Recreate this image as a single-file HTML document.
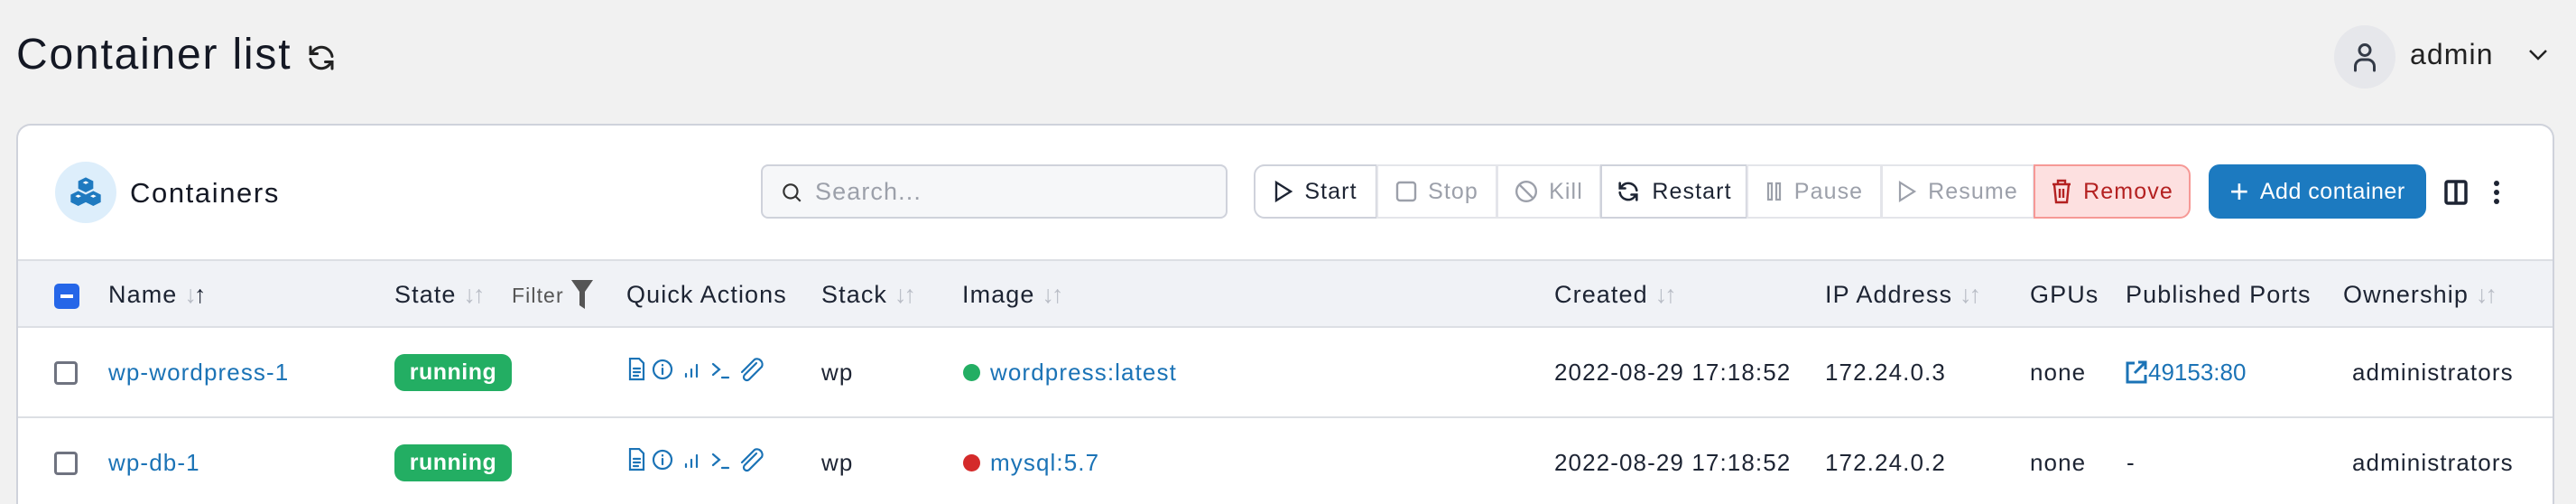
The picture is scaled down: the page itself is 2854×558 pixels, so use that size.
<!DOCTYPE html>
<html><head><meta charset="utf-8"><style>
*{box-sizing:border-box;margin:0;padding:0}
html{width:2854px;height:558px;overflow:hidden}
body{width:2854px;height:558px;overflow:hidden;background:#f1f1f1;font-family:"Liberation Sans",sans-serif;color:#1d2433;position:relative;letter-spacing:1.1px}
.a{position:absolute;white-space:nowrap}
.card{position:absolute;left:18px;top:137px;width:2812px;height:421px;background:#fff;border:2px solid #cfd2db;border-bottom:none;border-radius:16px 16px 0 0;overflow:hidden}
.btn{position:absolute;top:182px;height:60px;border:2px solid #e4e5ea;background:#fff;font-size:25px;display:flex;align-items:center;justify-content:center;gap:12px;color:#9ca0aa}
.dark{color:#1d2433;border-color:#cfd2db}
.hd{font-size:27px;color:#1d2433;top:310px;line-height:32px}
.srt{color:#b9bdc6;font-size:27px;letter-spacing:-3px;margin-left:8px}
.t{font-size:26px}
.lnk{color:#1b73b6}
.badge{position:absolute;width:130px;height:41px;background:#23ae63;border-radius:11px;color:#fff;font-weight:bold;font-size:25px;text-align:center;line-height:41px;letter-spacing:0.5px}
.cb{position:absolute;width:26px;height:26px;border:3px solid #6f7380;border-radius:4px;background:#fff}
</style></head><body>
<div class="a" style="left:18px;top:33px;font-size:48px;font-weight:500;color:#141824;letter-spacing:1.8px">Container list</div>
<svg class="a" style="left:337px;top:46px" width="38" height="36" viewBox="0 0 24 24" fill="none" stroke="#222" stroke-width="2" stroke-linecap="round"><path d="M20 11a8 8 0 0 0-14-4L4 9M4 4v5h5M4 13a8 8 0 0 0 14 4l2-2M20 20v-5h-5"/></svg>
<div class="a" style="left:2586px;top:28px;width:68px;height:70px;border-radius:50%;background:#e6e7eb"></div>
<svg class="a" style="left:2602px;top:44px" width="36" height="38" viewBox="0 0 24 24" fill="none" stroke="#333a47" stroke-width="2" stroke-linecap="round"><circle cx="12" cy="7" r="4"/><path d="M5 22v-3a5 5 0 0 1 5-5h4a5 5 0 0 1 5 5v3"/></svg>
<div class="a" style="left:2670px;top:42px;font-size:32px;color:#222">admin</div>
<svg class="a" style="left:2800px;top:52px" width="24" height="18" viewBox="0 0 24 18" fill="none" stroke="#222" stroke-width="2.5"><path d="M3 4l9 9 9-9"/></svg>

<div class="card"></div>
<div class="a" style="left:61px;top:179px;width:68px;height:68px;border-radius:50%;background:#ddeefb"></div>
<svg class="a" style="left:75px;top:193px" width="40" height="40" viewBox="0 0 24 24" fill="#1f7ac0"><path d="M12 2l5 2.5v5l-5 2.5-5-2.5v-5z"/><path d="M7 11l5 2.5v5L7 21l-5-2.5v-5z"/><path d="M17 11l5 2.5v5L17 21l-5-2.5v-5z"/><g fill="#fff"><path d="M10 5.5l2 1 2-1-2-1z"/><path d="M5 14.5l2 1 2-1-2-1z"/><path d="M15 14.5l2 1 2-1-2-1z"/></g></svg>
<div class="a" style="left:144px;top:196px;font-size:31px;font-weight:500;color:#141824;letter-spacing:1.6px">Containers</div>

<div class="a" style="left:843px;top:182px;width:517px;height:60px;border:2px solid #cfd2db;border-radius:8px;background:#f6f7f9"></div>
<svg class="a" style="left:864px;top:199px" width="26" height="28" viewBox="0 0 24 24" fill="none" stroke="#333" stroke-width="2"><circle cx="11" cy="11" r="7"/><path d="M16 16l5 5"/></svg>
<div class="a" style="left:903px;top:197px;font-size:27px;color:#9ca0aa">Search...</div>

<div class="btn dark" style="left:1389px;width:137px;border-radius:12px 0 0 12px"><svg width="22" height="26" viewBox="0 0 22 26" fill="none" stroke="#1d2433" stroke-width="2.4"><path d="M3 3l16 10L3 23z"/></svg>Start</div>
<div class="btn" style="left:1525px;width:134px"><svg width="24" height="24" viewBox="0 0 24 24" fill="none" stroke="#9ca0aa" stroke-width="2.4"><rect x="2" y="2" width="20" height="20" rx="3"/></svg>Stop</div>
<div class="btn" style="left:1658px;width:116px"><svg width="26" height="26" viewBox="0 0 24 24" fill="none" stroke="#9ca0aa" stroke-width="2.2"><circle cx="12" cy="12" r="10"/><path d="M5 5l14 14"/></svg>Kill</div>
<div class="btn dark" style="left:1773px;width:163px"><svg width="28" height="28" viewBox="0 0 24 24" fill="none" stroke="#1d2433" stroke-width="2.2" stroke-linecap="round"><path d="M20 11a8 8 0 0 0-14-4L4 9M4 4v5h5M4 13a8 8 0 0 0 14 4l2-2M20 20v-5h-5"/></svg>Restart</div>
<div class="btn" style="left:1935px;width:150px"><svg width="20" height="24" viewBox="0 0 20 24" fill="none" stroke="#9ca0aa" stroke-width="2.2"><rect x="3" y="3" width="4" height="18"/><rect x="12" y="3" width="4" height="18"/></svg>Pause</div>
<div class="btn" style="left:2084px;width:170px"><svg width="22" height="26" viewBox="0 0 22 26" fill="none" stroke="#9ca0aa" stroke-width="2.2"><path d="M3 3l16 10L3 23z"/></svg>Resume</div>
<div class="btn" style="left:2253px;width:174px;border-radius:0 12px 12px 0;background:#fde0e0;border-color:#f69996;color:#b42121"><svg width="24" height="28" viewBox="0 0 24 28" fill="none" stroke="#b42121" stroke-width="2.4"><path d="M2 6h20M8 6V2h8v4M4 6l2 20h12l2-20M10 11v10M14 11v10"/></svg>Remove</div>
<div class="btn" style="left:2447px;width:241px;background:#1c7ac0;border:none;border-radius:12px;color:#fff;letter-spacing:0.5px"><span style="font-size:36px;font-weight:300;line-height:1">+</span>Add container</div>
<svg class="a" style="left:2708px;top:199px" width="26" height="28" viewBox="0 0 26 28" fill="none" stroke="#1d2433" stroke-width="3.5"><rect x="2" y="2" width="22" height="24" rx="2"/><path d="M13 2v24"/></svg>
<svg class="a" style="left:2759px;top:199px" width="14" height="28" viewBox="0 0 14 28" fill="#1d2433"><circle cx="7" cy="4" r="3"/><circle cx="7" cy="14" r="3"/><circle cx="7" cy="24" r="3"/></svg>

<div class="a" style="left:20px;top:287px;width:2808px;height:76px;background:#f0f2f6;border-top:2px solid #dcdfe4;border-bottom:2px solid #dcdfe4"></div>
<div class="a" style="left:20px;top:461px;width:2808px;height:2px;background:#dcdfe4"></div>
<div class="a" style="left:60px;top:314px;width:28px;height:28px;background:#2566e8;border-radius:5px"><div style="position:absolute;left:7px;top:12px;width:14px;height:4px;background:#fff"></div></div>
<div class="a hd" style="left:120px">Name<span class="srt">↓<span style="color:#1d2433">↑</span></span></div>
<div class="a hd" style="left:437px">State<span class="srt">↓↑</span></div>
<div class="a" style="left:567px;top:314px;font-size:23px;color:#555">Filter</div>
<svg class="a" style="left:633px;top:310px" width="24" height="32" viewBox="0 0 24 32" fill="#555"><path d="M0 0h24L15 13v19l-6-4V13z"/></svg>
<div class="a hd" style="left:694px">Quick Actions</div>
<div class="a hd" style="left:910px">Stack<span class="srt">↓↑</span></div>
<div class="a hd" style="left:1066px">Image<span class="srt">↓↑</span></div>
<div class="a hd" style="left:1722px">Created<span class="srt">↓↑</span></div>
<div class="a hd" style="left:2022px">IP Address<span class="srt">↓↑</span></div>
<div class="a hd" style="left:2249px">GPUs</div>
<div class="a hd" style="left:2355px">Published Ports</div>
<div class="a hd" style="left:2596px">Ownership<span class="srt">↓↑</span></div>

<div class="cb" style="left:60px;top:400px"></div>
<div class="a t lnk" style="left:120px;top:397px">wp-wordpress-1</div>
<div class="badge" style="left:437px;top:392px">running</div>
<div class="a t" style="left:910px;top:397px">wp</div>
<div class="a" style="left:1067px;top:403px;width:19px;height:19px;border-radius:50%;background:#23ae63"></div>
<div class="a t lnk" style="left:1097px;top:397px">wordpress:latest</div>
<div class="a t" style="left:1722px;top:397px">2022-08-29 17:18:52</div>
<div class="a t" style="left:2022px;top:397px">172.24.0.3</div>
<div class="a t" style="left:2249px;top:397px">none</div>
<svg class="a" style="left:2355px;top:399px" width="24" height="26" viewBox="0 0 24 26" fill="none" stroke="#1b73b6" stroke-width="3"><path d="M10 3H2v21h20v-8M14 2h8v8M22 2L10 14"/></svg>
<div class="a t lnk" style="left:2380px;top:397px;letter-spacing:0px">49153:80</div>
<div class="a t" style="left:2606px;top:397px">administrators</div>

<div class="cb" style="left:60px;top:500px"></div>
<div class="a t lnk" style="left:120px;top:497px">wp-db-1</div>
<div class="badge" style="left:437px;top:492px">running</div>
<div class="a t" style="left:910px;top:497px">wp</div>
<div class="a" style="left:1067px;top:503px;width:19px;height:19px;border-radius:50%;background:#d42a2a"></div>
<div class="a t lnk" style="left:1097px;top:497px">mysql:5.7</div>
<div class="a t" style="left:1722px;top:497px">2022-08-29 17:18:52</div>
<div class="a t" style="left:2022px;top:497px">172.24.0.2</div>
<div class="a t" style="left:2249px;top:497px">none</div>
<div class="a t" style="left:2356px;top:497px">-</div>
<div class="a t" style="left:2606px;top:497px">administrators</div>

<svg width="0" height="0" style="position:absolute"><defs><g id="qa" fill="none" stroke="#1b73b6" stroke-width="2.2" stroke-linecap="round"><path d="M2 1h10l5 5v18H2z"/><path d="M6 12h7M6 16h7M6 20h5"/><circle cx="38" cy="13" r="10"/><path d="M38 12v6M38 8v0.5"/><path d="M64 21v-3M70 21v-8M76 21V8"/><path d="M94 7l7 6-7 6M104 22h7"/><path d="M142 6l-13 13a3.5 3.5 0 0 0 5 5l14-14a6 6 0 0 0-8-8L126 16"/></g></defs></svg>
<svg class="a" style="left:696px;top:396px" width="160" height="28" viewBox="0 0 160 28"><use href="#qa"/></svg>
<svg class="a" style="left:696px;top:496px" width="160" height="28" viewBox="0 0 160 28"><use href="#qa"/></svg>
</body></html>
